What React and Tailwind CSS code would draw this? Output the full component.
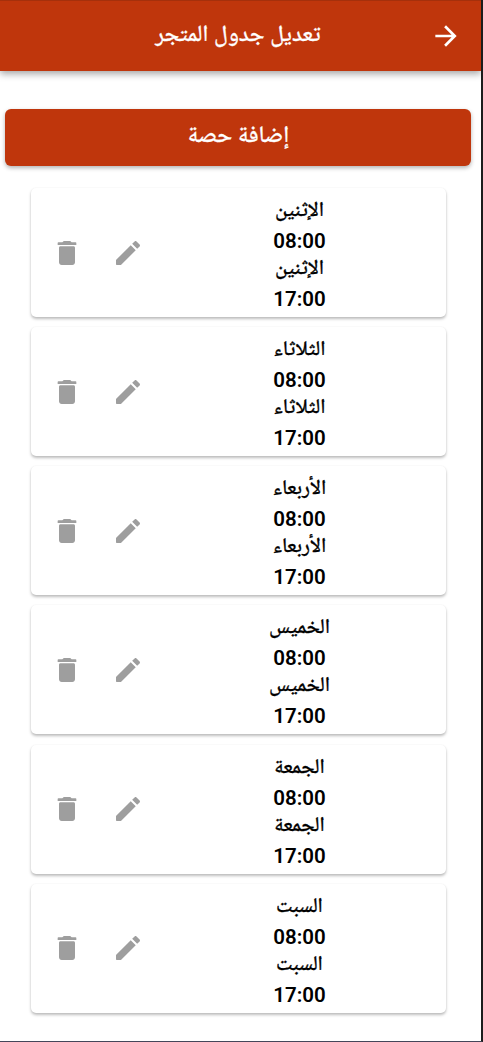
const days = ["الإثنين", "الثلاثاء", "الأربعاء", "الخميس", "الجمعة", "السبت"];

function Icon({ d, className }) {
  return (
    <svg viewBox="0 0 24 24" fill="currentColor" className={className} aria-hidden="true">
      <path d={d} />
    </svg>
  );
}

function DayName({ children }) {
  return (
    <p dir="rtl" className="h-[27px] text-[20.8px] leading-[28px] whitespace-nowrap [-webkit-text-stroke:0.3px_currentColor]">
      {children}
    </p>
  );
}

function Time({ children }) {
  return <p className="h-[31px] text-[20.5px] leading-[39px] font-semibold">{children}</p>;
}

function DayCard({ day }) {
  return (
    <section className="flex h-[129px] items-stretch rounded-[5px] bg-white shadow-[0_2px_3px_rgba(0,0,0,0.26),0_0_2px_rgba(0,0,0,0.06)]">
      <div className="flex w-[153px] items-center pl-5 text-[#9e9e9e]">
        <button aria-label="حذف" className="mr-[29px]">
          <Icon className="size-8" d="M6 19c0 1.1.9 2 2 2h8c1.1 0 2-.9 2-2V8.2c0-.8-.4-1.2-1.2-1.2H7.2C6.4 7 6 7.400 6 8.200zM18.500 4H15.500l-.7-.7c-.2-.2-.4-.3-.7-.3H9.900c-.3 0-.5.1-.7.3l-.7.700H5.500C5.200 4 5 4.200 5 4.500V6h14V4.500c0-.3-.2-.5-.5-.5z" />
        </button>
        <button aria-label="تعديل">
          <Icon className="size-8" d="M3 17.46v3.04c0 .28.22.5.5.5h3.04c.13 0 .26-.05.35-.15L17.81 9.94l-3.75-3.75L3.15 17.1c-.1.1-.15.22-.15.36zM20.71 7.04c.39-.39.39-1.02 0-1.41l-2.34-2.34c-.39-.39-1.02-.39-1.41 0l-1.83 1.83 3.75 3.75 1.83-1.83z" />
        </button>
      </div>
      <div className="flex w-[231px] flex-col items-center pt-[7px] font-medium text-black">
        <DayName>{day}</DayName>
        <Time>08:00</Time>
        <DayName>{day}</DayName>
        <Time>17:00</Time>
      </div>
    </section>
  );
}

export default function App() {
  return (
    <main className="h-[1042px] w-[483px] overflow-hidden border-r-2 border-b border-r-[#1c1c1c] border-b-[#44465a] bg-white font-['Roboto','Noto_Naskh_Arabic','DejaVu_Sans',sans-serif]">
      <header className="flex h-[71px] items-center border-t border-[#a5300c] bg-[#bf360c] text-white shadow-[0_3px_7px_rgba(0,0,0,0.35)]">
        <h1 dir="rtl" className="ml-[119px] w-[238px] pb-1 text-center text-[23px] leading-8 font-medium [-webkit-text-stroke:0.3px_currentColor]">تعديل جدول المتجر</h1>
        <Icon className="ml-[73px] size-8" d="M12 4l-1.41 1.41L16.17 11H4v2h12.17l-5.58 5.59L12 20l8-8z" />
      </header>
      <button dir="rtl" className="mt-[38px] ml-[5px] block h-[57px] w-[466px] rounded-[6px] bg-[#bf360c] pb-[7px] pl-px text-[23.4px] leading-8 font-medium text-white shadow-[0_2px_4px_rgba(0,0,0,0.3)] [-webkit-text-stroke:0.3px_currentColor]">إضافة حصة</button>
      <div className="mt-[22px] ml-[31px] flex w-[415px] flex-col gap-[10.15px]">
        {days.map((day) => <DayCard key={day} day={day} />)}
      </div>
    </main>
  );
}
